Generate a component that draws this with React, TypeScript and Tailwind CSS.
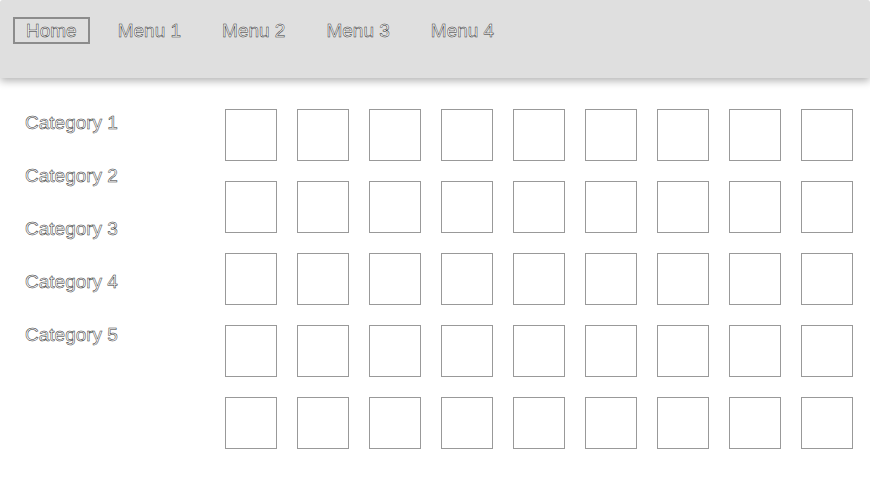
const menus = ["Home", "Menu 1", "Menu 2", "Menu 3", "Menu 4"];
const categories = ["Category 1", "Category 2", "Category 3", "Category 4", "Category 5"];
const tiles = Array.from({ length: 45 }, (_, i) => i);

const outline = "text-white [-webkit-text-stroke:0.5px_#2e2e2e] antialiased";

export default function App() {
  return (
    <div className="w-[870px] h-[484px] bg-white overflow-hidden rounded-[3px] font-['Liberation_Sans',Arial,sans-serif]">

      {/* Top nav */}
      <div className="relative z-10 h-[78px] bg-[#dfdfdf] pt-[17px] pl-[13px] flex items-start gap-[15px] shadow-[0_3px_8px_rgba(0,0,0,0.3)]">
        {menus.map((m, i) => (
          <div
            key={m}
            className={`px-[11px] border-2 text-[19px] leading-[23px] ${outline} ${i === 0 ? "border-[#8c8c8c]" : "border-transparent"}`}
          >
            {m}
          </div>
        ))}
      </div>

      <div className="flex pt-[31px]">
        {/* Categories */}
        <div className="w-[225px] pl-[25px] pt-[2px] flex flex-col gap-[30px]">
          {categories.map((c) => (
            <div key={c} className={`text-[19px] leading-[23px] ${outline}`}>
              {c}
            </div>
          ))}
        </div>

        {/* Tiles */}
        <div className="grid grid-cols-9 gap-[20px]">
          {tiles.map((t) => (
            <div key={t} className="w-[52px] h-[52px] border border-[#999]" />
          ))}
        </div>
      </div>
    </div>
  );
}
